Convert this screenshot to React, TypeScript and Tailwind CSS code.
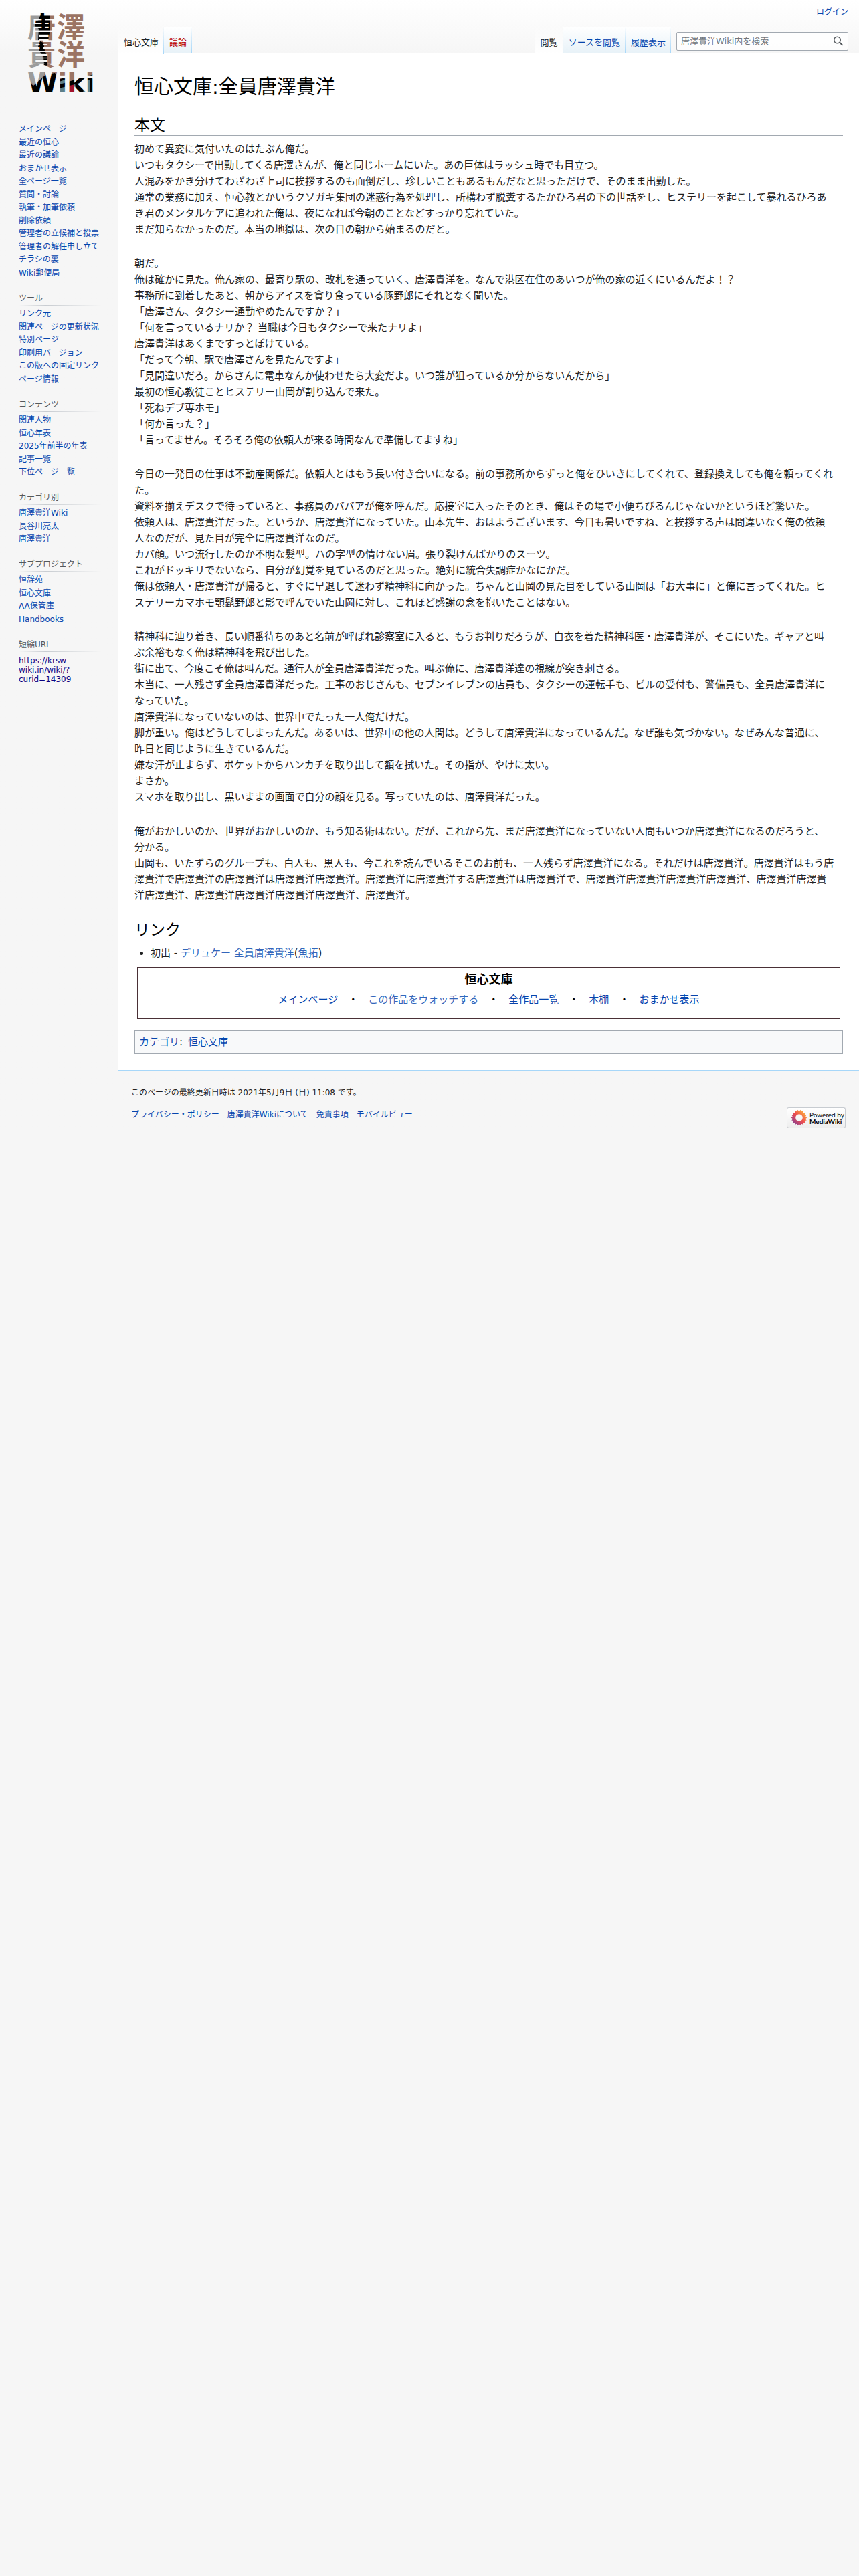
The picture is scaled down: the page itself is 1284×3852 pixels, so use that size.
import React from 'react';

const navigation = [
  'メインページ',
  '最近の恒心',
  '最近の議論',
  'おまかせ表示',
  '全ページ一覧',
  '質問・討論',
  '執筆・加筆依頼',
  '削除依頼',
  '管理者の立候補と投票',
  '管理者の解任申し立て',
  'チラシの裏',
  'Wiki郵便局'
];

const portals = [
  {
    title: 'ツール',
    links: ['リンク元', '関連ページの更新状況', '特別ページ', '印刷用バージョン', 'この版への固定リンク', 'ページ情報']
  },
  {
    title: 'コンテンツ',
    links: ['関連人物', '恒心年表', '2025年前半の年表', '記事一覧', '下位ページ一覧']
  },
  {
    title: 'カテゴリ別',
    links: ['唐澤貴洋Wiki', '長谷川亮太', '唐澤貴洋']
  },
  {
    title: 'サブプロジェクト',
    links: ['恒辞苑', '恒心文庫', 'AA保管庫', 'Handbooks']
  }
];

const paragraphs = [
  `初めて異変に気付いたのはたぶん俺だ。
いつもタクシーで出勤してくる唐澤さんが、俺と同じホームにいた。あの巨体はラッシュ時でも目立つ。
人混みをかき分けてわざわざ上司に挨拶するのも面倒だし、珍しいこともあるもんだなと思っただけで、そのまま出勤した。
通常の業務に加え、恒心教とかいうクソガキ集団の迷惑行為を処理し、所構わず脱糞するたかひろ君の下の世話をし、ヒステリーを起こして暴れるひろあ
き君のメンタルケアに追われた俺は、夜になれば今朝のことなどすっかり忘れていた。
まだ知らなかったのだ。本当の地獄は、次の日の朝から始まるのだと。`,
  `朝だ。
俺は確かに見た。俺ん家の、最寄り駅の、改札を通っていく、唐澤貴洋を。なんで港区在住のあいつが俺の家の近くにいるんだよ！？
事務所に到着したあと、朝からアイスを貪り食っている豚野郎にそれとなく聞いた。
「唐澤さん、タクシー通勤やめたんですか？」
「何を言っているナリか？ 当職は今日もタクシーで来たナリよ」
唐澤貴洋はあくまですっとぼけている。
「だって今朝、駅で唐澤さんを見たんですよ」
「見間違いだろ。からさんに電車なんか使わせたら大変だよ。いつ誰が狙っているか分からないんだから」
最初の恒心教徒ことヒステリー山岡が割り込んで来た。
「死ねデブ専ホモ」
「何か言った？」
「言ってません。そろそろ俺の依頼人が来る時間なんで準備してますね」`,
  `今日の一発目の仕事は不動産関係だ。依頼人とはもう長い付き合いになる。前の事務所からずっと俺をひいきにしてくれて、登録換えしても俺を頼ってくれ
た。
資料を揃えデスクで待っていると、事務員のババアが俺を呼んだ。応接室に入ったそのとき、俺はその場で小便ちびるんじゃないかというほど驚いた。
依頼人は、唐澤貴洋だった。というか、唐澤貴洋になっていた。山本先生、おはようございます、今日も暑いですね、と挨拶する声は間違いなく俺の依頼
人なのだが、見た目が完全に唐澤貴洋なのだ。
カバ顔。いつ流行したのか不明な髪型。ハの字型の情けない眉。張り裂けんばかりのスーツ。
これがドッキリでないなら、自分が幻覚を見ているのだと思った。絶対に統合失調症かなにかだ。
俺は依頼人・唐澤貴洋が帰ると、すぐに早退して迷わず精神科に向かった。ちゃんと山岡の見た目をしている山岡は「お大事に」と俺に言ってくれた。ヒ
ステリーカマホモ顎髭野郎と影で呼んでいた山岡に対し、これほど感謝の念を抱いたことはない。`,
  `精神科に辿り着き、長い順番待ちのあと名前が呼ばれ診察室に入ると、もうお判りだろうが、白衣を着た精神科医・唐澤貴洋が、そこにいた。ギャアと叫
ぶ余裕もなく俺は精神科を飛び出した。
街に出て、今度こそ俺は叫んだ。通行人が全員唐澤貴洋だった。叫ぶ俺に、唐澤貴洋達の視線が突き刺さる。
本当に、一人残さず全員唐澤貴洋だった。工事のおじさんも、セブンイレブンの店員も、タクシーの運転手も、ビルの受付も、警備員も、全員唐澤貴洋に
なっていた。
唐澤貴洋になっていないのは、世界中でたった一人俺だけだ。
脚が重い。俺はどうしてしまったんだ。あるいは、世界中の他の人間は。どうして唐澤貴洋になっているんだ。なぜ誰も気づかない。なぜみんな普通に、
昨日と同じように生きているんだ。
嫌な汗が止まらず、ポケットからハンカチを取り出して額を拭いた。その指が、やけに太い。
まさか。
スマホを取り出し、黒いままの画面で自分の顔を見る。写っていたのは、唐澤貴洋だった。`,
  `俺がおかしいのか、世界がおかしいのか、もう知る術はない。だが、これから先、まだ唐澤貴洋になっていない人間もいつか唐澤貴洋になるのだろうと、
分かる。
山岡も、いたずらのグループも、白人も、黒人も、今これを読んでいるそこのお前も、一人残らず唐澤貴洋になる。それだけは唐澤貴洋。唐澤貴洋はもう唐
澤貴洋で唐澤貴洋の唐澤貴洋は唐澤貴洋唐澤貴洋。唐澤貴洋に唐澤貴洋する唐澤貴洋は唐澤貴洋で、唐澤貴洋唐澤貴洋唐澤貴洋唐澤貴洋、唐澤貴洋唐澤貴
洋唐澤貴洋、唐澤貴洋唐澤貴洋唐澤貴洋唐澤貴洋、唐澤貴洋。`
];

const bunkoLinks = ['メインページ', 'この作品をウォッチする', '全作品一覧', '本棚', 'おまかせ表示'];

const footerLinks = ['プライバシー・ポリシー', '唐澤貴洋Wikiについて', '免責事項', 'モバイルビュー'];

function Logo() {
  return (
    <a href="#" aria-label="メインページ" className="block">
      <svg width="160" height="160" viewBox="0 0 160 160" className="block">
        <defs>
          <pattern id="portrait" patternUnits="userSpaceOnUse" width="160" height="160">
            <rect width="160" height="160" fill="#9b7464" />
            <path d="M0 0H62L58 60L62 80L68 100L66 112L52 128L46 122L40 160H0Z" fill="#9b9b9b" />
            <path d="M61 20H74V50L72 60H57L58 43L52 39V33L58 30Z" fill="#000" />
            <path d="M60 62L65 64L67 76L71 84V98L66 97L65 84L60 78L57 70Z" fill="#000" />
            <path d="M42 122L50 128L68 112L82 109L90 122V160H42Z" fill="#000" />
            <path d="M88 122L99 118V160H88Z" fill="#5d7f88" />
            <path d="M100 126H111V160H100Z" fill="#a3122c" />
            <path d="M111 126L140 114V160H111Z" fill="#5d7f88" />
            <path d="M80 121L100 115V118L80 125Z M80 129L112 119L140 111V117L112 126L80 134Z M112 124L124 128L126 160H117Z M134 118H140V160H135Z" fill="#000" />
          </pattern>
        </defs>
        <text fill="url(#portrait)" fontSize="42" className="font-['Noto_Sans_CJK_JP',sans-serif] font-bold">
          <tspan x="41 85" y="56">唐澤</tspan>
          <tspan x="41 85" y="97">貴洋</tspan>
          <tspan x="41" y="138" fontSize="41" className="font-['DejaVu_Sans',sans-serif]">Wiki</tspan>
        </text>
      </svg>
    </a>);

}

function Sidebar() {
  return (
    <aside className="w-44 shrink-0 pr-6 pl-7 text-xs">
      <div className="-ml-7">
        <Logo />
      </div>
      <nav aria-label="案内" className="pt-6">
        <LinkList links={navigation} />
      </nav>
      {portals.map((portal) =>
      <nav key={portal.title} aria-label={portal.title} className="mt-[18px]">
          <PortalHeading>{portal.title}</PortalHeading>
          <LinkList links={portal.links} />
        </nav>
      )}
      <section className="mt-[18px]">
        <PortalHeading>短縮URL</PortalHeading>
        <a href="#" className="mt-1.5 block w-20 leading-[14px] text-[#0b0080]">
          https://krsw-wiki.in/wiki/?curid=14309
        </a>
      </section>
    </aside>);

}

function PortalHeading({ children }: {children: React.ReactNode;}) {
  return (
    <>
      <h3 className="h-5 leading-5 text-[#54595d]">{children}</h3>
      <div className="mb-[3px] h-px bg-linear-to-r from-transparent via-[#c8ccd1] via-33% to-transparent" />
    </>);

}

function LinkList({ links }: {links: string[];}) {
  return (
    <ul>
      {links.map((link) =>
      <li key={link} className="whitespace-nowrap odd:h-[19px] odd:leading-[19px] even:h-5 even:leading-5">
          <a href="#" className="text-[#0645ad] hover:underline">{link}</a>
        </li>
      )}
    </ul>);

}

function Tab({ label, selected, missing }: {label: string;selected?: boolean;missing?: boolean;}) {
  return (
    <li
      className={
      selected ?
      'flex bg-linear-to-b from-transparent to-white' :
      'flex border-b border-[#a7d7f9] bg-linear-to-b from-white to-[#e8f2f8]'
      }>
      
      <a
        href="#"
        className={
        selected ?
        'pt-4 pr-[7px] pl-2 text-[#202122]' :
        missing ?
        'pt-4 pr-[7px] pl-2 text-[#ba0000]' :
        'pt-4 pr-[7px] pl-2 text-[#0645ad]'
        }>
        
        {label}
      </a>
      <TabLine />
    </li>);

}

function TabLine() {
  return <span className="-mb-px w-px bg-linear-to-b from-transparent to-[#a7d7f9]" />;
}

function Header() {
  return (
    <header className="flex h-20 flex-col">
      <div className="flex h-10 justify-end px-4 pt-2.5">
        <a href="#" className="h-4 text-xs leading-4 text-[#0645ad]">ログイン</a>
      </div>
      <div className="flex h-10 text-[13px] leading-4">
        <TabLine />
        <ul className="flex">
          <Tab label="恒心文庫" selected />
          <Tab label="議論" missing />
        </ul>
        <div className="flex-1 border-b border-[#a7d7f9]" />
        <TabLine />
        <ul className="flex">
          <Tab label="閲覧" selected />
          <Tab label="ソースを閲覧" />
          <Tab label="履歴表示" />
        </ul>
        <form className="flex w-[281px] border-b border-[#a7d7f9] pt-2 pr-4 pl-2" onSubmit={(e) => e.preventDefault()}>
          <div className="flex h-7 flex-1 items-center rounded-xs border border-[#a2a9b1] bg-white/80 px-1.5">
            <input
              type="search"
              aria-label="検索"
              placeholder="唐澤貴洋Wiki内を検索"
              className="min-w-0 flex-1 text-[13px] outline-none placeholder:text-[#72777d]" />
            
            <button type="submit" aria-label="検索" className="text-[#54595d]">
              <svg width="16" height="16" viewBox="0 0 16 16" fill="none" stroke="currentColor" strokeWidth="1.6">
                <circle cx="6.5" cy="6" r="4.7" />
                <path d="M10 9.5L14.5 14" strokeWidth="2" />
              </svg>
            </button>
          </div>
        </form>
      </div>
    </header>);

}

function SectionHeading({ children }: {children: React.ReactNode;}) {
  return <h2 className="h-[31px] border-b border-[#a2a9b1] text-[23px] leading-[30px] text-black">{children}</h2>;
}

function Article() {
  return (
    <main className="border-b border-l border-[#a7d7f9] bg-white px-6 pt-8 pb-6 text-[15px] leading-6 text-[#202122]">
      <h1 className="h-[38px] border-b border-[#a2a9b1] text-[29px] leading-[36px] text-black">恒心文庫:全員唐澤貴洋</h1>

      <div className="mt-[22px]">
        <SectionHeading>本文</SectionHeading>
        <div className="mt-2 space-y-[27px]">
          {paragraphs.map((text) =>
          <p key={text} className="whitespace-pre-line">{text}</p>
          )}
        </div>
      </div>

      <div className="mt-6">
        <SectionHeading>リンク</SectionHeading>
        <ul className="mt-[7px] list-disc pl-6">
          <li>
            初出 - <a href="#" className="text-[#3366bb]">デリュケー 全員唐澤貴洋</a>(<a href="#" className="text-[#3366bb]">魚拓</a>)
          </li>
        </ul>
      </div>

      <nav aria-label="恒心文庫" className="mx-1 mt-[9px] border border-[#4a3036] pt-1 pb-4 text-center text-black">
        <div className="text-lg leading-7 font-bold">恒心文庫</div>
        <div className="pt-1">
          {bunkoLinks.map((link, i) =>
          <React.Fragment key={link}>
              {i > 0 && '　・　'}
              <a href="#" className={i === 1 ? 'text-[#3366bb]' : 'text-[#0645ad]'}>{link}</a>
            </React.Fragment>
          )}
        </div>
      </nav>

      <div className="mt-4 flex gap-2 border border-[#a2a9b1] bg-[#f8f9fa] px-1.5 py-[5px]">
        <span><a href="#" className="text-[#0645ad]">カテゴリ</a>:</span>
        <a href="#" className="text-[#0645ad]">恒心文庫</a>
      </div>
    </main>);

}

function MediaWikiBadge() {
  const petals = Array.from({ length: 18 }, (_, i) => i * 20);
  return (
    <a
      href="#"
      className="flex h-[31px] w-[88px] shrink-0 items-center gap-[3px] rounded-[3px] border border-[#c8ccd1] border-b-[#a2a9b1] bg-linear-to-b from-white to-[#eeeeee] pl-[5px]">
      
      <svg width="25" height="25" viewBox="-13 -13 26 26" className="shrink-0">
        <defs>
          <linearGradient id="sunflower" gradientUnits="userSpaceOnUse" x1="9" y1="-9" x2="-9" y2="9">
            <stop offset="0" stopColor="#fcb13b" />
            <stop offset="0.5" stopColor="#ee4d4f" />
            <stop offset="1" stopColor="#8c3f8f" />
          </linearGradient>
        </defs>
        <circle r="8" fill="none" stroke="url(#sunflower)" strokeWidth="5" />
        {petals.map((angle) => {
          const a = angle * Math.PI / 180;
          const x = Math.cos(a);
          const y = Math.sin(a);
          return (
            <path
              key={angle}
              d={`M${x * 12.5} ${y * 12.5}L${x * 9 - y * 2} ${y * 9 + x * 2}L${x * 9 + y * 2} ${y * 9 - x * 2}Z`}
              fill="url(#sunflower)" />);


        })}
      </svg>
      <span className="font-['Lato',sans-serif] text-[10px] leading-[10px] whitespace-nowrap text-black">
        Powered by
        <b className="block">MediaWiki</b>
      </span>
    </a>);

}

function Footer() {
  return (
    <footer className="flex items-start justify-between px-5 pt-[23px] text-xs leading-5 text-[#202122]">
      <div>
        <p>このページの最終更新日時は 2021年5月9日 (日) 11:08 です。</p>
        <ul className="mt-[13px] flex gap-3">
          {footerLinks.map((link) =>
          <li key={link}>
              <a href="#" className="text-[#0645ad] hover:underline">{link}</a>
            </li>
          )}
        </ul>
      </div>
      <div className="pt-8">
        <MediaWikiBadge />
      </div>
    </footer>);

}

export default function App() {
  return (
    <div lang="ja" className="min-h-screen bg-[#f6f6f6] font-['DejaVu_Sans','Noto_Sans_CJK_JP',sans-serif]">
      <div className="flex bg-linear-to-b from-white to-[#f6f6f6] to-[80px]">
        <Sidebar />
        <div className="min-w-0 flex-1">
          <Header />
          <Article />
          <Footer />
        </div>
      </div>
    </div>);

}
